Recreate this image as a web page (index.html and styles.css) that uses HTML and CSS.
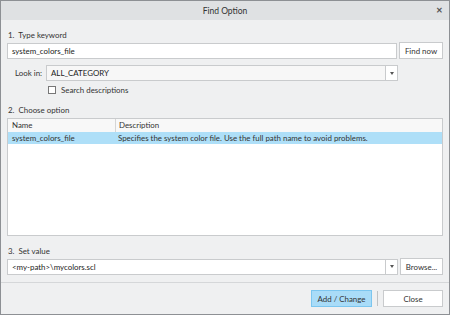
FILE: index.html
```html
<!DOCTYPE html>
<html lang="en">
<head>
  <meta charset="UTF-8">
  <title>Find Option</title>
  <link rel="stylesheet" href="styles.css">
</head>
<body>
  <div class="dialog">
    <div class="titlebar">
      <span class="title">Find Option</span>
      <span class="close">&#x2715;</span>
    </div>

    <div class="content">
      <div class="step">1.&nbsp; Type keyword</div>
      <div class="row">
        <div class="field grow">system_colors_file</div>
        <div class="btn find">Find now</div>
      </div>
      <div class="row lookin">
        <span class="lbl">Look in:</span>
        <div class="combo grow">
          <span class="val">ALL_CATEGORY</span>
          <span class="arrow"></span>
        </div>
      </div>
      <div class="check">
        <span class="box"></span>
        <span>Search descriptions</span>
      </div>

      <div class="step s2">2.&nbsp; Choose option</div>
      <div class="table">
        <div class="thead">
          <div class="c1">Name</div>
          <div class="c2">Description</div>
        </div>
        <div class="tr sel">
          <div class="c1">system_colors_file</div>
          <div class="c2">Specifies the system color file. Use the full path name to avoid problems.</div>
        </div>
      </div>

      <div class="step s3">3.&nbsp; Set value</div>
      <div class="row">
        <div class="combo white grow">
          <span class="val">&lt;my-path&gt;\mycolors.scl</span>
          <span class="arrow"></span>
        </div>
        <div class="btn browse">Browse...</div>
      </div>
    </div>

    <div class="footer">
      <div class="btn primary">Add / Change</div>
      <span class="vsep"></span>
      <div class="btn closebtn">Close</div>
    </div>
  </div>
</body>
</html>
```

FILE: styles.css
```css
html, body {
  margin: 0;
  padding: 0;
}
body {
  font-family: "Lato", "Noto Sans", sans-serif;
  font-size: 7.9px;
  color: #333;
  background: #eff0f1;
  white-space: nowrap;
}
.dialog {
  width: 450px;
  height: 315px;
  box-sizing: border-box;
  border: 1px solid #8d9094;
  display: flex;
  flex-direction: column;
  background: #eff0f1;
  overflow: hidden;
}
.titlebar {
  height: 19px;
  flex: none;
  background: #dfe1e3;
  display: flex;
  align-items: center;
  justify-content: center;
  position: relative;
}
.title {
  font-size: 8.5px;
  color: #333;
}
.close {
  position: absolute;
  right: 6px;
  top: 4px;
  font-size: 8px;
  color: #555;
  font-weight: bold;
}
.content {
  padding: 0 6px;
  flex: 1;
  min-height: 0;
}
.step {
  margin-top: 8px;
  height: 14px;
  line-height: 14px;
  padding-left: 1px;
}
.step.s2 {
  margin-top: 8px;
}
.step.s3 {
  margin-top: 8px;
}
.row {
  display: flex;
  align-items: center;
  gap: 2px;
}
.grow {
  flex: 1;
}
.field, .combo {
  height: 16px;
  box-sizing: border-box;
  border: 1px solid #c9cbcd;
  background: #fff;
  padding: 0 4px;
  line-height: 14px;
  color: #222;
}
.combo {
  display: flex;
  padding-right: 0;
  background: #f7f7f7;
}
.combo.white {
  background: #fff;
}
.combo .val {
  flex: 1;
}
.arrow {
  width: 11px;
  border-left: 1px solid #c9cbcd;
  background: #fff;
  display: flex;
  align-items: center;
  justify-content: center;
}
.arrow::after {
  content: "";
  border-left: 2.5px solid transparent;
  border-right: 2.5px solid transparent;
  border-top: 3px solid #555;
}
.btn {
  height: 17px;
  box-sizing: border-box;
  border: 1px solid #c9cbcd;
  background: #fff;
  display: flex;
  align-items: center;
  justify-content: center;
  color: #333;
}
.find {
  width: 44px;
}
.browse {
  width: 43px;
}
.lookin {
  margin-top: 6px;
  padding-left: 8px;
  gap: 4px;
}
.lookin .lbl {
  width: 27px;
}
.lookin .combo {
  margin-right: 45px;
}
.check {
  display: flex;
  align-items: center;
  gap: 5px;
  margin-top: 4px;
  padding-left: 41px;
}
.box {
  width: 6px;
  height: 6px;
  border: 1px solid #777;
  background: #fff;
}
.table {
  margin-top: 1px;
  height: 118px;
  box-sizing: border-box;
  border: 1px solid #c9cbcd;
  background: #fff;
}
.thead, .tr {
  display: flex;
  height: 12px;
  line-height: 12px;
}
.thead {
  height: 13px;
  line-height: 13px;
  background: #f8f8f8;
}
.thead .c1 {
  border-right: 1px solid #d5d5d5;
}
.c1 {
  width: 103px;
  padding-left: 4px;
}
.c2 {
  padding-left: 3px;
}
.tr.sel {
  background: #aedff8;
}
.footer {
  height: 31px;
  flex: none;
  border-top: 1px solid #d5d7d9;
  display: flex;
  align-items: center;
  justify-content: flex-end;
  padding-right: 6px;
  gap: 5px;
}
.primary {
  width: 61px;
  background: #a9dcf8;
  border-color: #7cc6ef;
}
.vsep {
  width: 1px;
  height: 15px;
  background: #c0c2c4;
}
.closebtn {
  width: 60px;
}
```
